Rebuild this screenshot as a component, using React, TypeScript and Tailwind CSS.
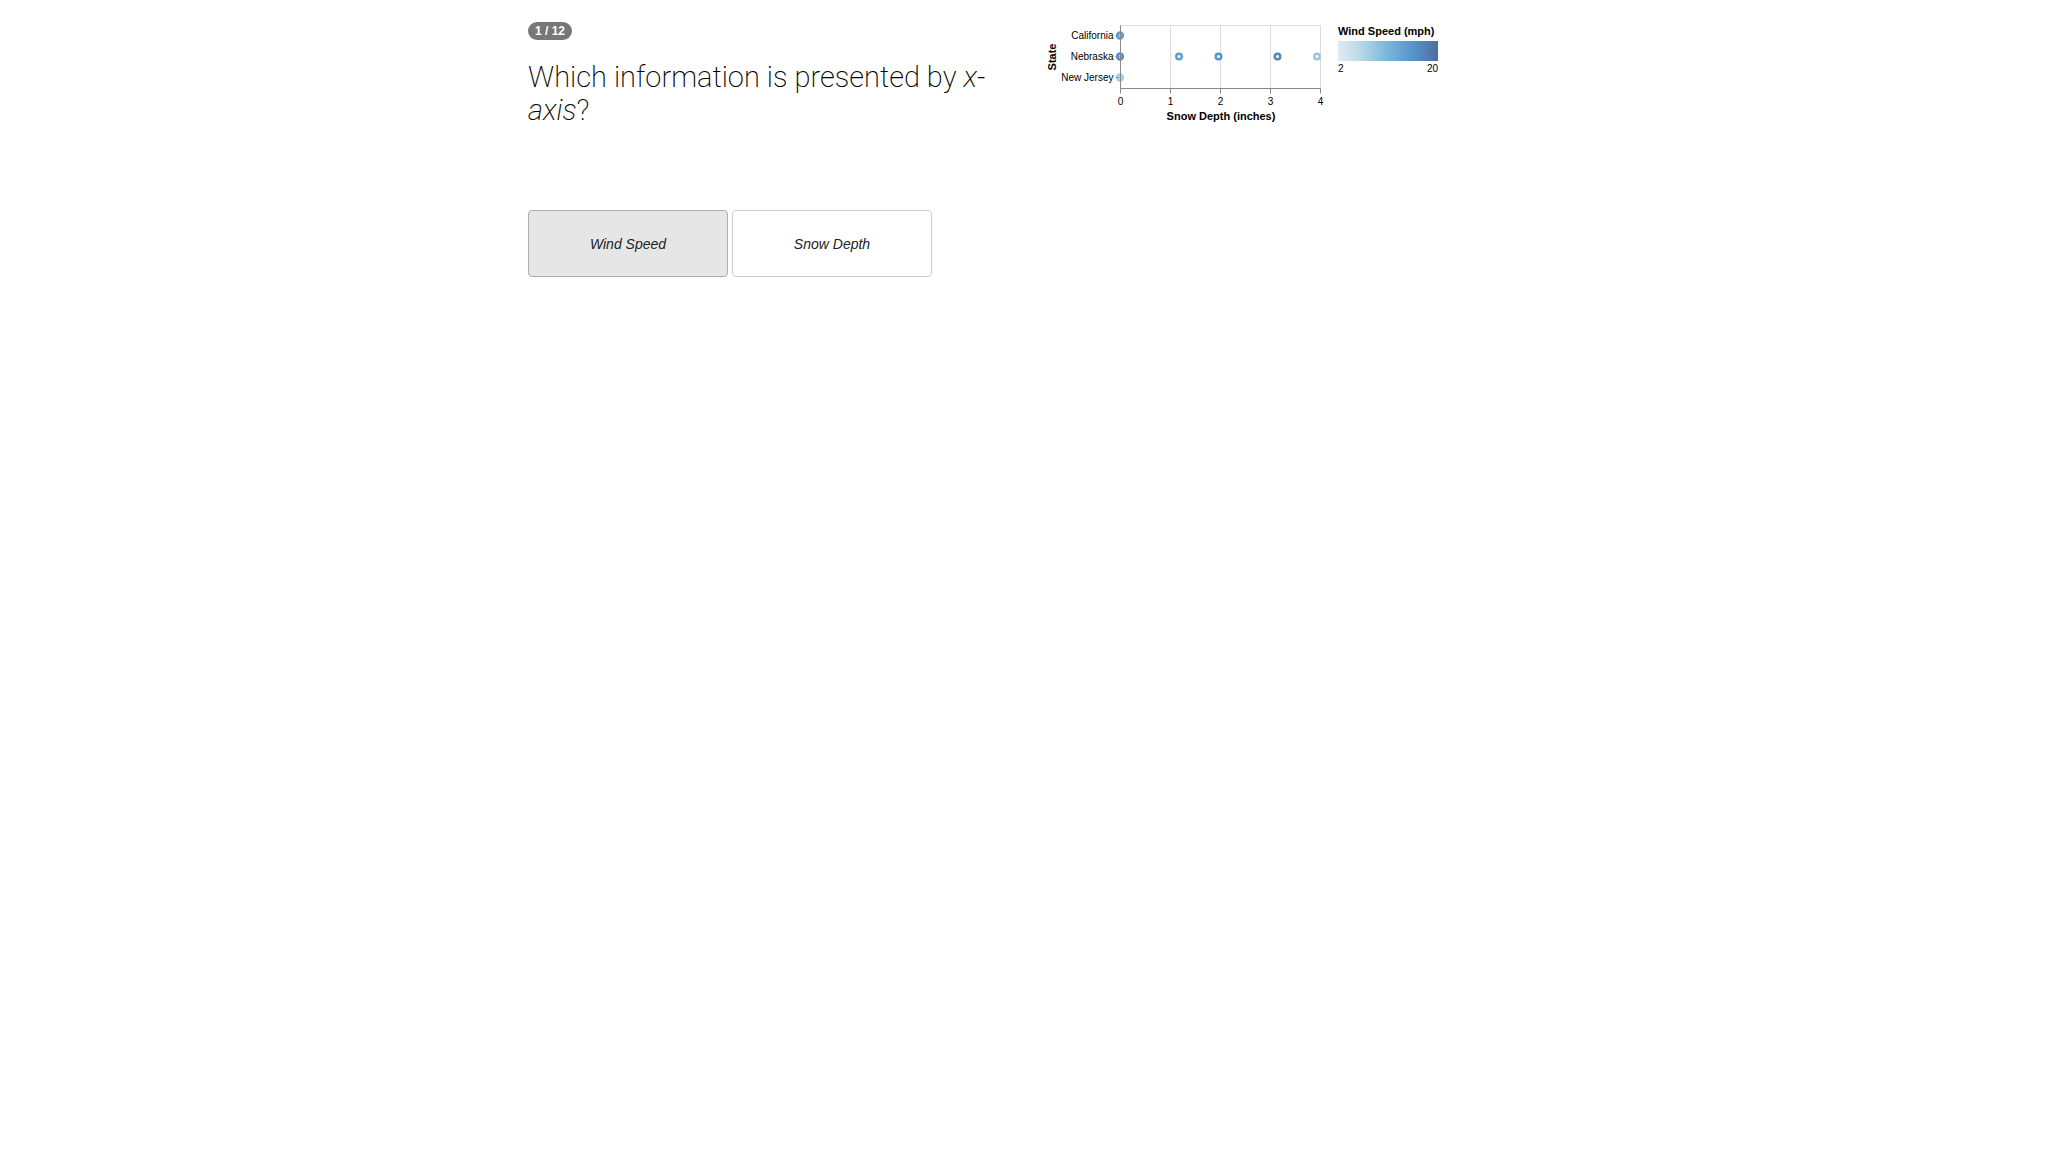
const X0 = 81.5;
const STEP = 50;
const TOP = 10.5;
const BOTTOM = 73.5;

const states = [
  { name: 'California', y: 20.5 },
  { name: 'Nebraska', y: 41.5 },
  { name: 'New Jersey', y: 62.5 },
];

const points = [
  { depth: 1.17, color: '#5b9ecb' },
  { depth: 1.96, color: '#5297c8' },
  { depth: 3.14, color: '#5486bb' },
  { depth: 3.93, color: '#97c6e1' },
];

const zeroPoints = [
  { y: 20.5, color: '#5b9fcd' },
  { y: 41.5, color: '#5397c8' },
  { y: 62.5, color: '#a9cee4' },
];

function SnowChart() {
  return (
    <svg
      width="420"
      height="120"
      viewBox="0 0 420 120"
      role="img"
      aria-label="Snow depth by state, coloured by wind speed"
      className="fill-black font-['Liberation_Sans',Arial,sans-serif] text-[10px]"
    >
      <defs>
        <linearGradient id="wind">
          <stop offset="0" stopColor="#dfebf7" />
          <stop offset="0.2" stopColor="#bfdae9" />
          <stop offset="0.35" stopColor="#98cae1" />
          <stop offset="0.55" stopColor="#73aed6" />
          <stop offset="0.75" stopColor="#5794c9" />
          <stop offset="1" stopColor="#4e6d9d" />
        </linearGradient>
      </defs>

      <rect x={X0} y={TOP} width={STEP * 4} height={BOTTOM - TOP} fill="none" stroke="#dddddd" />
      {[1, 2, 3].map((n) => (
        <line key={n} x1={X0 + n * STEP} x2={X0 + n * STEP} y1={TOP} y2={BOTTOM} stroke="#dddddd" />
      ))}

      {zeroPoints.map((p) => (
        <circle key={p.y} cx={X0 - 0.5} cy={p.y} r="2.7" fill="none" stroke={p.color} strokeWidth="3" />
      ))}

      <g stroke="#888888">
        <line x1={X0} x2={X0} y1={TOP} y2={BOTTOM} />
        <line x1={X0} x2={X0 + STEP * 4} y1={BOTTOM} y2={BOTTOM} />
        {states.map((s) => (
          <line key={s.name} x1={X0 - 5} x2={X0} y1={s.y} y2={s.y} strokeOpacity="0.7" />
        ))}
        {[0, 1, 2, 3, 4].map((n) => (
          <line key={n} x1={X0 + n * STEP} x2={X0 + n * STEP} y1={BOTTOM} y2={BOTTOM + 5} />
        ))}
      </g>

      {points.map((p) => (
        <circle key={p.depth} cx={X0 + p.depth * STEP} cy="41.5" r="2.8" fill="none" stroke={p.color} strokeWidth="2.4" />
      ))}

      {states.map((s) => (
        <text key={s.name} x={X0 - 7} y={s.y + 3} textAnchor="end">
          {s.name}
        </text>
      ))}
      {[0, 1, 2, 3, 4].map((n) => (
        <text key={n} x={X0 + n * STEP} y="90" textAnchor="middle">
          {n}
        </text>
      ))}

      <g className="text-[11px] font-bold">
        <text x="182" y="105" textAnchor="middle">
          Snow Depth (inches)
        </text>
        <text transform="translate(17 42) rotate(-90)" textAnchor="middle">
          State
        </text>
        <text x="299" y="20">
          Wind Speed (mph)
        </text>
      </g>

      <rect x="299" y="26" width="100" height="20" fill="url(#wind)" />
      <text x="299" y="57">
        2
      </text>
      <text x="399" y="57" textAnchor="end">
        20
      </text>
    </svg>
  );
}

export default function App() {
  return (
    <main className="grid min-h-screen grid-cols-4 bg-white pt-[15px] font-['Liberation_Sans',Arial,sans-serif] text-[#222222]">
      <section className="col-start-2 px-4">
        <div className="mt-[7px] flex">
          <span className="h-[18px] rounded-[10px] bg-[#777777] px-[7px] text-[12px] leading-[18px] font-bold whitespace-nowrap text-white">
            1 / 12
          </span>
        </div>
        <h1 className="mt-[21px] font-[Roboto,'Liberation_Sans',sans-serif] text-[29px] leading-[33px] font-extralight text-black">
          Which information is presented by <em>x-axis</em>?
        </h1>
        <div className="mt-[83px] flex gap-1">
          <button
            type="button"
            aria-pressed="true"
            className="h-[67px] w-[200px] rounded-sm border border-[#adadad] bg-[#e6e6e6] pt-px text-[14px] italic"
          >
            Wind Speed
          </button>
          <button
            type="button"
            aria-pressed="false"
            className="h-[67px] w-[200px] rounded-sm border border-[#cccccc] bg-white pt-px text-[14px] italic"
          >
            Snow Depth
          </button>
        </div>
      </section>
      <section className="pl-[15px]">
        <SnowChart />
      </section>
    </main>
  );
}
